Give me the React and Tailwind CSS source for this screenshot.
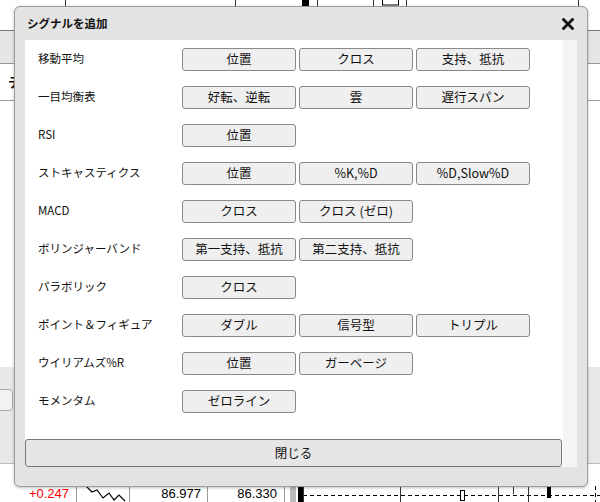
const rows = [
  { label: '移動平均', buttons: ['位置', 'クロス', '支持、抵抗'] },
  { label: '一目均衡表', buttons: ['好転、逆転', '雲', '遅行スパン'] },
  { label: 'RSI', buttons: ['位置'] },
  { label: 'ストキャスティクス', buttons: ['位置', '%K,%D', '%D,Slow%D'] },
  { label: 'MACD', buttons: ['クロス', 'クロス (ゼロ)'] },
  { label: 'ボリンジャーバンド', buttons: ['第一支持、抵抗', '第二支持、抵抗'] },
  { label: 'パラボリック', buttons: ['クロス'] },
  { label: 'ポイント＆フィギュア', buttons: ['ダブル', '信号型', 'トリプル'] },
  { label: 'ウイリアムズ%R', buttons: ['位置', 'ガーベージ'] },
  { label: 'モメンタム', buttons: ['ゼロライン'] },
];

const jp = { fontFamily: '"Noto Sans CJK JP", "Noto Sans", sans-serif' };
const num = { fontFamily: '"Liberation Sans", Arial, sans-serif' };

// page behind the dialog (mostly hidden)
const Background = () => (
  <div className="absolute inset-0 bg-white flex flex-col">
    <svg width="600" height="30" className="shrink-0">
      {[65, 235, 317, 373, 406, 578].map((x) => (
        <line key={x} x1={x + 0.5} y1="0" x2={x + 0.5} y2="30" stroke="#333" />
      ))}
      <rect x="302" y="0" width="7" height="6" fill="#000" />
      <rect x="382.5" y="-1" width="16" height="6" fill="#fff" stroke="#000" />
    </svg>
    <div className="h-[33px] shrink-0 border-t border-[#777] bg-[#e6e6e6]" />
    <div className="h-[38px] shrink-0 border-y border-[#999] bg-white flex items-center pl-[8px]">
      <span className="text-[13px] font-bold" style={jp}>テ</span>
    </div>
    <div className="h-[266px] shrink-0" />
    <div className="h-[97px] shrink-0 bg-[#e8e8e8] border-b border-[#bbb] pt-[22px]">
      <div className="ml-[-6px] h-[22px] w-[19px] rounded-[4px] border border-[#aaa] bg-[#f2f2f2]" />
    </div>
    <div className="h-[22px] shrink-0" />
    <div className="flex h-[36px] shrink-0 items-start" style={num}>
      <div className="w-[77px] border-r border-[#999] h-full pr-[7px] text-right text-[13px] leading-[16px] text-[#f00]">+0.247</div>
      <div className="w-[53px] border-r border-[#999] h-full">
        <svg width="53" height="16" viewBox="0 0 53 16">
          <polyline points="9,0 15,6 20,4 26,12 32,7 37,14 42,9 48,15" fill="none" stroke="#000" strokeWidth="1.2" />
        </svg>
      </div>
      <div className="w-[78px] border-r border-[#999] h-full pr-[6px] text-right text-[13px] leading-[16px]">86.977</div>
      <div className="w-[77px] border-r border-[#999] h-full pr-[7px] text-right text-[13px] leading-[16px]">86.330</div>
      <svg width="315" height="36" className="shrink-0">
        <rect x="5" y="0" width="6" height="36" fill="#bbb" />
        <rect x="13" y="0" width="5" height="36" fill="#000" />
        <line x1="18" y1="9.5" x2="315" y2="9.5" stroke="#000" strokeDasharray="4 3" />
        {[18, 115, 213, 243].map((x) => (
          <line key={x} x1={x + 0.5} y1="0" x2={x + 0.5} y2="36" stroke="#333" />
        ))}
        <line x1="228.5" y1="0" x2="228.5" y2="8" stroke="#333" />
        <rect x="175.5" y="4.5" width="4" height="10" fill="#fff" stroke="#000" />
        <rect x="262" y="0" width="4" height="12" fill="#000" />
        <line x1="310.5" y1="0" x2="310.5" y2="36" stroke="#000" strokeDasharray="4 3" />
      </svg>
    </div>
  </div>
);

export default function App() {
  return (
    <div className="relative w-[600px] h-[502px] overflow-hidden bg-white" style={jp}>
      <Background />

      <div className="absolute left-[14px] top-[6px] w-[574px] h-[481px] rounded-[6px] border border-[#9c9c9c] bg-[#e3e3e3] shadow-[0_1px_3px_rgba(0,0,0,0.25)] flex flex-col">
        <div className="h-[33px] flex items-center justify-between pl-[12px] pr-[13px]">
          <span className="text-[11.5px] font-bold text-[#111]">シグナルを追加</span>
          <svg width="12" height="12" viewBox="0 0 12 12">
            <path d="M1.5 1.5 L10.5 10.5 M10.5 1.5 L1.5 10.5" stroke="#111" strokeWidth="2.8" strokeLinecap="square" />
          </svg>
        </div>

        <div className="mx-[10px] h-[427px] flex">
          <div className="flex-1 bg-white flex flex-col">
            {rows.map((row) => (
              <div key={row.label} className="h-[38px] flex items-center pl-[13px]">
                <span className="w-[144px] shrink-0 text-[11.5px] text-[#111]">{row.label}</span>
                <div className="flex gap-[3px]">
                  {row.buttons.map((b) => (
                    <button
                      key={b}
                      className="w-[114px] h-[23px] rounded-[3px] border border-[#8a8a8a] bg-[#efefef] text-[12.5px] leading-none text-[#111]"
                    >
                      {b}
                    </button>
                  ))}
                </div>
              </div>
            ))}
            <button className="mt-auto mr-[1px] h-[28px] rounded-[3px] border border-[#777] bg-[#e6e6e6] text-[12.5px] text-[#111]">
              閉じる
            </button>
          </div>
          <div className="w-[14px] bg-[#f4f4f4]" />
        </div>
      </div>
    </div>
  );
}
